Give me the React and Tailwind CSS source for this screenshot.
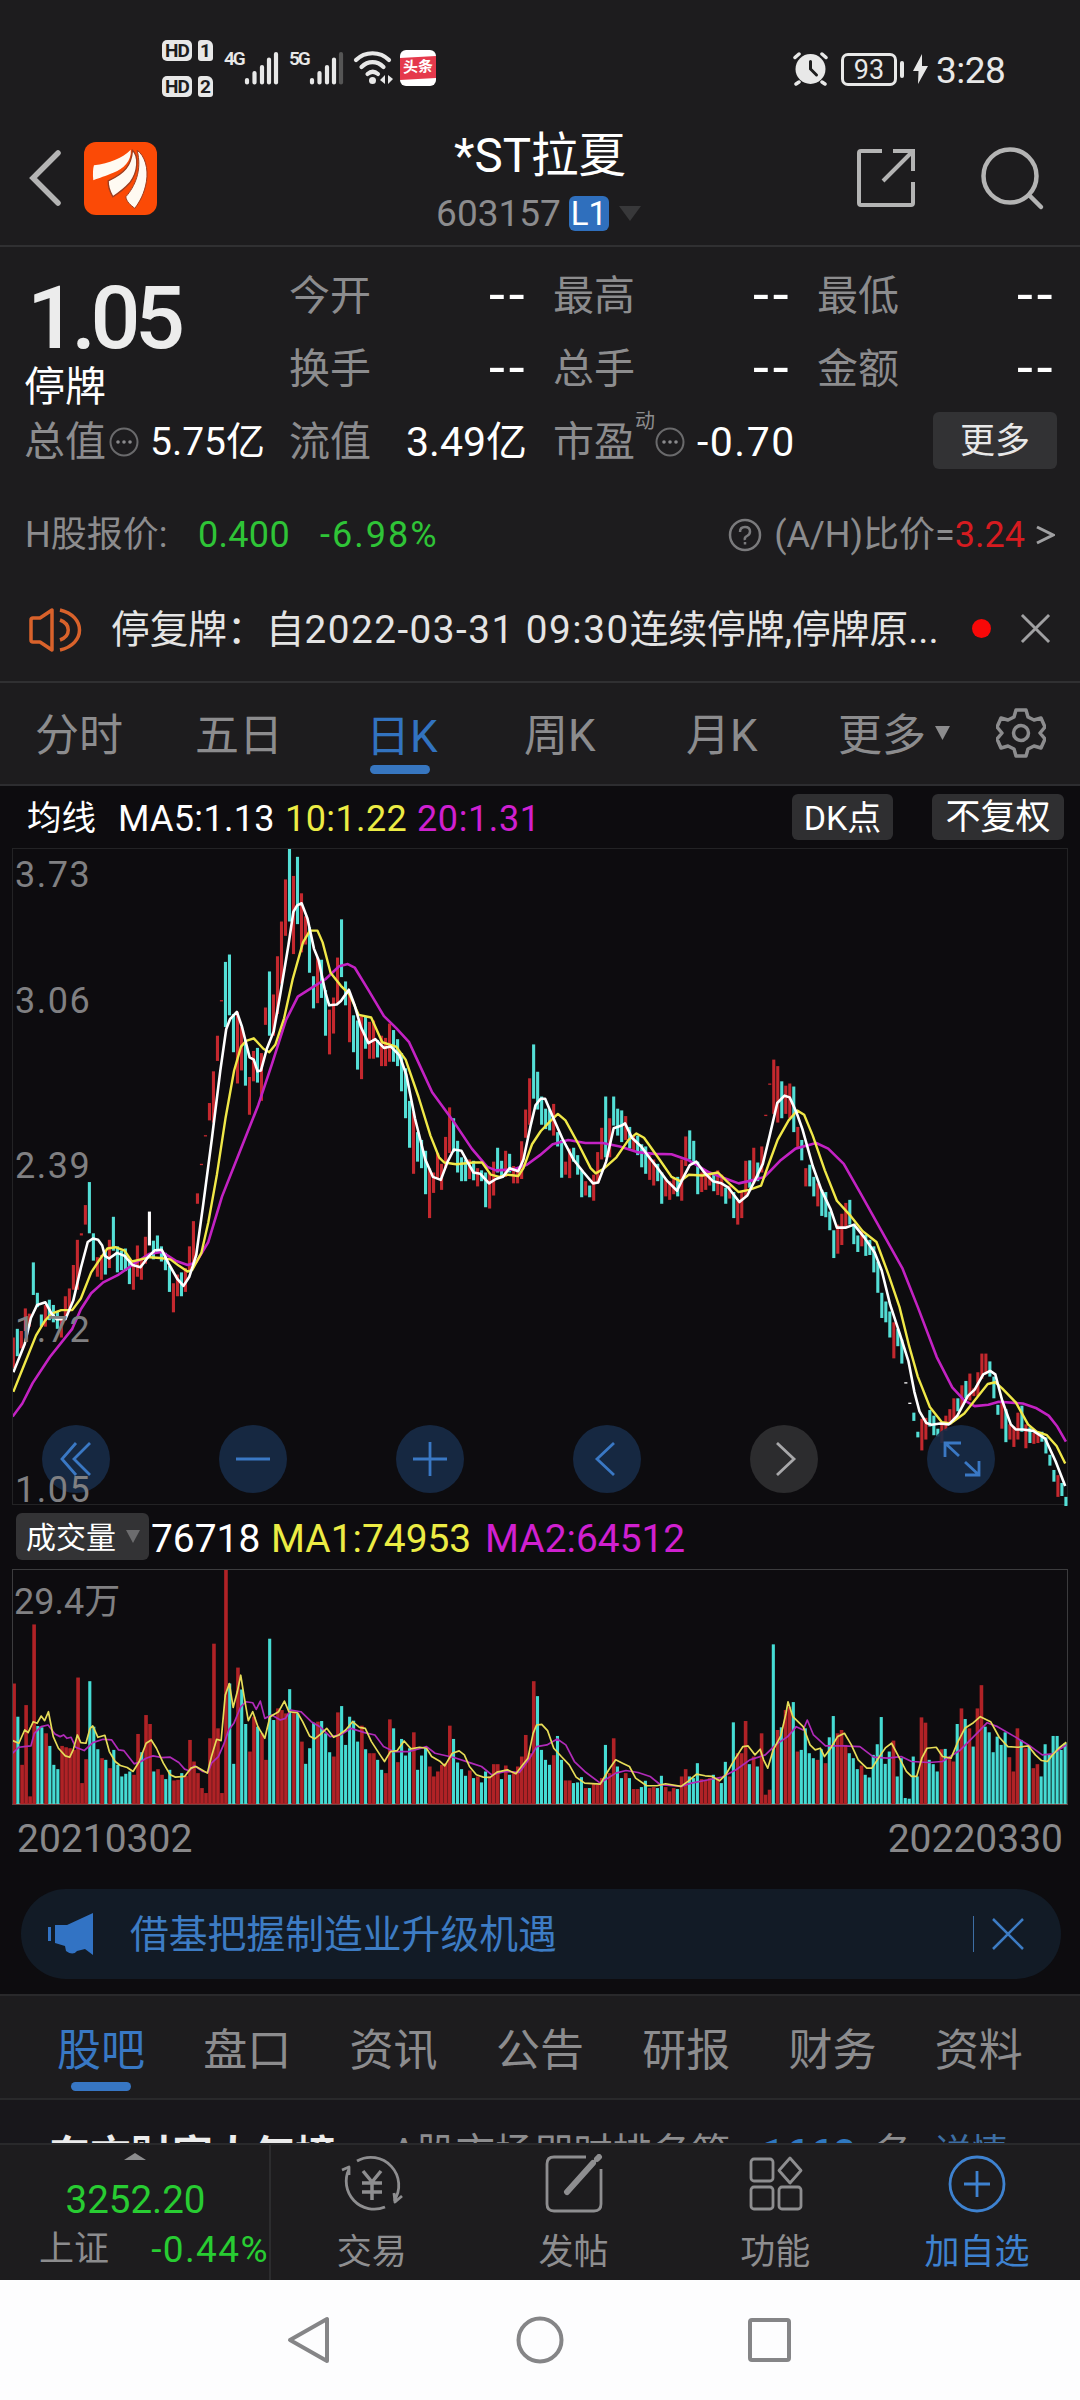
import React from "react";

// [high, low, type] per day, r = up, c = down, w = flat
const CANDLES = `1145,1215,r 1125,1188,c 1130,1170,r 1078,1130,r 1090,1120,r 972,1047,c 1042,1075,c 1092,1120,c 1070,1120,r 1058,1105,c 1070,1110,c 1085,1125,c
1100,1145,r 1050,1105,r 1032,1085,r 978,1035,r 920,1035,r 905,910,r 840,885,r 787,905,c 905,968,c 960,1005,r 955,1012,r 945,1000,c 920,985,r 867,945,c 935,995,c
945,990,c 940,992,c 965,1022,c 970,1035,r 933,1005,r 965,1012,r 913,975,r 855,933,w 922,965,c 910,950,c 935,970,c 950,990,c 980,1040,c 1020,1087,r 1000,1050,r
995,1050,c 985,1040,r 935,990,r 877,980,r 813,837,r 745,748,r 679,682,r 605,645,r 532,650,r 450,508,r 368,371,r 280,430,c 263,403,c 400,488,c 395,560,r 430,530,r
460,565,c 545,632,r 485,555,r 478,558,c 490,600,r 385,425,r 302,450,c 355,450,r 267,400,r 187,330,r 90,220,r 20,187,c 82,262,r 38,193,c 122,258,r 175,240,r
200,305,c 313,387,c 270,375,r 275,363,c 345,450,c 390,493,r 362,445,r 270,375,r 182,315,c 325,380,c 350,465,r 403,488,c 415,528,c 405,550,r 405,480,c 418,503,r
415,503,r 460,500,c 450,520,r 455,520,r 422,510,r 437,510,c 458,520,c 490,578,c 525,640,c 600,708,c 625,768,r 672,740,c 690,755,c 715,815,c 755,870,r 765,812,r
720,780,r 745,805,r 683,755,r 615,720,r 640,718,c 692,765,c 730,785,c 735,785,c 735,780,r 738,783,c 755,797,r 760,785,c 765,845,c 765,848,r 740,818,r 708,765,c
738,775,c 715,775,r 722,765,c 750,790,r 755,790,r 693,780,r 620,685,r 548,655,r 470,595,c 533,620,c 590,655,c 618,665,c 620,668,c 607,680,r 672,705,c 690,777,c
740,770,r 710,778,r 708,740,c 725,770,c 760,822,c 785,818,r 795,822,c 770,830,r 718,790,r 662,735,r 590,730,c 640,730,r 590,657,c 618,680,c 622,695,c 635,690,r
660,710,c 680,715,r 680,725,c 700,753,c 705,768,c 725,782,r 735,795,r 745,785,c 765,837,c 780,820,r 785,828,r 780,815,r 775,820,c 735,830,r 682,750,r 668,735,c
692,745,c 740,815,c 765,810,r 760,805,r 765,795,r 770,808,c 760,817,r 770,820,r 800,837,c 795,825,r 810,870,c 830,885,r 810,870,r 738,820,r 737,800,c 708,790,r
742,785,c 705,765,r 632,635,r 560,563,r 505,630,r 520,650,r 555,640,c 565,630,r 560,640,r 567,672,c 660,710,r 690,737,c 755,797,r 747,797,c 775,820,c 790,843,r
805,865,c 810,868,c 855,898,c 898,962,c 885,952,r 860,932,r 835,890,r 828,885,c 885,930,c 910,948,c 900,935,r 908,957,c 920,955,c 935,995,c 970,1042,c 1042,1100,c
1062,1110,c 1085,1145,c 1110,1193,r 1125,1165,c 1150,1205,c 1248,1251,w 1295,1298,w 1318,1337,c 1362,1375,c 1332,1405,r 1330,1380,r 1312,1350,c 1325,1370,c
1355,1373,c 1340,1388,r 1325,1360,r 1310,1345,r 1285,1335,r 1285,1315,c 1255,1305,r 1245,1285,c 1228,1290,r 1262,1280,r 1225,1280,r 1182,1240,r 1182,1230,r
1200,1235,c 1235,1285,c 1300,1323,c 1290,1355,r 1310,1386,c 1345,1380,r 1350,1397,r 1318,1380,r 1302,1362,c 1345,1400,r 1352,1388,c 1365,1390,r 1365,1388,r
1362,1385,c 1375,1412,c 1415,1440,c 1450,1477,c 1462,1512,r 1480,1510,c 1512,1533,c`.split(/\s+/).map((d) => d.split(","));

const MA5 = "39,1225 72,1160 90,1100 108,1070 132,1064 150,1090 165,1103 190,1103 213,1060 235,985 255,925 270,917 285,920 297,933 305,957 317,963 340,950 362,957 385,978 408,983 432,958 450,944 470,943 490,975 515,1010 533,1026 550,1005 570,955 590,840 615,690 640,530 657,435 668,412 688,395 703,430 725,500 737,505 748,532 758,530 775,480 795,440 815,350 838,240 852,165 863,150 876,145 893,180 912,250 925,275 945,350 956,380 978,378 990,370 1013,344 1030,380 1048,430 1070,467 1090,458 1115,478 1135,475 1160,495 1180,540 1205,640 1235,735 1257,775 1280,782 1300,740 1318,712 1340,715 1357,740 1375,765 1395,768 1420,790 1440,780 1460,775 1480,755 1505,762 1520,735 1540,660 1555,610 1570,595 1583,595 1607,640 1635,690 1665,735 1695,765 1722,790 1737,788 1760,740 1782,663 1805,657 1815,652 1835,685 1862,705 1885,730 1910,755 1938,785 1966,807 1985,775 2003,748 2022,740 2045,765 2070,785 2095,790 2115,800 2147,833 2170,818 2197,775 2215,745 2235,680 2257,605 2278,588 2293,592 2312,625 2330,665 2360,750 2385,805 2412,850 2430,892 2455,892 2480,885 2510,915 2540,950 2560,990 2585,1070 2612,1135 2638,1200 2655,1270 2670,1315 2690,1342 2705,1346 2730,1343 2755,1345 2780,1325 2810,1280 2830,1265 2855,1230 2875,1222 2890,1230 2910,1290 2935,1345 2950,1357 2970,1357 3000,1360 3035,1378 3065,1430 3093,1487";
const MA10 = "39,1270 72,1205 105,1140 130,1107 150,1090 178,1082 210,1082 235,1055 265,995 290,965 312,940 335,937 362,945 383,970 410,965 435,960 465,962 495,965 520,980 545,993 558,990 585,950 605,880 630,770 655,640 680,530 700,475 715,462 737,456 765,480 782,488 800,470 825,410 850,320 880,235 900,208 922,208 937,235 960,305 990,335 1015,355 1042,402 1078,408 1110,465 1150,475 1178,505 1215,590 1250,680 1275,730 1290,742 1325,746 1375,742 1400,742 1425,770 1450,775 1475,770 1505,773 1520,755 1545,700 1570,670 1600,645 1620,630 1642,645 1680,700 1715,755 1730,767 1755,755 1790,730 1825,690 1848,675 1870,685 1915,735 1950,775 1975,785 2000,770 2040,772 2085,765 2110,785 2145,810 2175,805 2210,795 2230,750 2258,690 2290,645 2315,622 2335,632 2360,680 2395,760 2430,830 2470,865 2505,900 2545,925 2580,1000 2612,1075 2640,1165 2665,1235 2700,1305 2735,1340 2760,1343 2800,1320 2845,1275 2868,1252 2890,1248 2910,1262 2950,1295 2985,1345 3010,1362 3040,1370 3068,1395 3093,1435";
const MA20 = "37,1327 65,1297 95,1250 145,1190 210,1125 235,1080 265,1043 300,1018 345,1000 390,975 435,952 470,948 510,968 545,978 570,972 605,925 645,820 690,730 750,610 790,515 830,415 865,360 905,340 945,320 985,290 1010,285 1030,293 1070,345 1115,405 1150,432 1188,465 1220,520 1255,580 1315,645 1370,710 1415,752 1440,760 1490,758 1530,747 1568,725 1605,700 1650,690 1700,697 1750,697 1800,705 1850,718 1900,722 1950,723 2000,737 2060,765 2110,780 2145,790 2190,782 2220,775 2265,738 2310,710 2370,697 2405,710 2450,745 2500,815 2560,900 2620,985 2665,1075 2720,1190 2765,1260 2800,1290 2830,1303 2870,1300 2900,1293 2970,1297 3010,1308 3045,1325 3070,1350 3095,1385";

const VOLUMES = `r550 c650 r795 r615 r890 r372 c678 c682 r700 c738 c795 c808 r738 r742 r745 r750 r532 r850 r778 c543 c680 c748 r775 c780 r805 c750 c795 c830 c822 c815 r825 r702 c757 r645 r672 c815 r808 r825 c838 c810 r842 r840 c820 r828 r720 r785 r820 r865 r880 r715 r430 r685 r880 r208 c550 c792 r502 c568 c672 r755 r650 c680 r700 r780 c415 c660 r625 r630 r640 c567
r635 c640 r725 c792 c745 c668 r665 c663 c700 c757 r770 r637 c618 c735 c650 c662 c725 r677 c748 r760 r760 c780 c810 r820 r658 c685 r787 c717 c767 c745 r697 c810 c767 c745 r800 r830 r815 r795 r790 r677 c717 c788 c808 c828 r812 c835 r830 c848 c815 r830 r793 r793 c838 r797 c825 r820 r800 r770 r705 r760 r543 c588
c750 c780 c795 r766 c708 c780 r842 r842 c850 c848 c832 r865 c865 r850 r855 r835 c735 r820 r715 c800 c835 r820 c835 r868 r868 c862 c843 r865 r862 c865 c828 r862 r875 r865 c868 r830 r808 c830 c835 c790 r838 r840 r835 c825 r835 c850 c786 r830 c667 r760 r760 r663 c793 r770 c800 r700 r885 r870 c432 r690 c682 r630 r620 c606 r755 c750 c685 c760 c775
r780 c748 r790 c712 c648 r700 r690 r735 c760 c775 c808 r797 c825 c833 c765 c733 c651 c792 c755 r722 c830 c775 c895 c897 c770 c830 r652 r668 c780 c793 c815 r748 c747 r775 r785 c672 r625 c657 r685 c740 r625 r555 c680 c697 c757 c710 c735 c697 r772 r815 r685 c720 r745 c738 r805 r793 c830 c733 c765 c708 c708 c750 c730`.split(/\s+/);

const VMA1 = "37,722 55,730 72,690 82,698 97,665 108,670 120,648 130,662 141,635 155,710 170,745 190,768 203,772 213,750 225,705 235,728 250,730 262,685 270,678 285,712 305,706 318,755 335,785 350,797 370,803 387,815 405,785 425,730 440,720 455,745 475,790 495,825 510,832 537,830 555,805 570,800 590,812 603,820 615,770 630,718 643,722 655,585 667,550 678,622 690,575 700,525 710,590 722,662 735,635 750,680 770,715 785,650 810,635 827,603 840,635 865,638 880,665 900,708 915,717 935,700 950,685 970,712 985,705 1005,690 1025,665 1045,682 1062,685 1080,725 1105,765 1118,785 1135,755 1155,752 1175,723 1195,747 1220,742 1240,745 1255,770 1280,785 1293,798 1315,760 1335,753 1350,765 1365,800 1385,825 1405,832 1425,833 1445,817 1475,810 1500,822 1520,795 1535,775 1550,700 1560,675 1575,673 1592,692 1610,745 1632,770 1655,795 1675,832 1700,850 1745,853 1770,810 1790,780 1810,790 1830,800 1848,835 1880,858 1910,858 1935,852 1980,860 2000,845 2025,823 2050,828 2070,830 2092,843 2110,825 2135,780 2160,740 2175,738 2195,765 2210,748 2220,780 2232,805 2248,750 2270,708 2285,640 2291,605 2305,650 2335,680 2355,735 2370,750 2385,745 2397,770 2415,745 2435,710 2455,700 2475,735 2495,780 2520,805 2535,805 2560,765 2575,743 2592,730 2610,765 2635,815 2650,830 2665,830 2680,775 2695,745 2722,742 2740,770 2765,775 2785,725 2805,685 2830,668 2850,650 2880,665 2905,712 2930,740 2960,742 2990,738 3010,765 3028,782 3045,785 3060,765 3078,745 3100,727";
const VMA2 = "37,760 55,742 70,740 90,738 100,700 120,680 140,675 160,702 175,710 185,705 195,715 207,712 220,742 245,752 270,728 300,718 325,720 345,750 360,752 390,792 410,785 425,775 445,768 470,773 495,772 520,788 537,808 550,813 565,798 590,815 605,818 615,790 635,770 650,735 665,690 680,670 700,620 715,605 735,608 745,628 757,603 770,655 790,645 815,660 830,655 845,630 875,635 905,665 930,680 960,710 990,705 1020,685 1060,698 1090,705 1115,740 1145,755 1190,755 1240,740 1265,760 1320,773 1370,790 1400,800 1430,825 1470,815 1510,818 1540,775 1560,740 1590,735 1620,717 1645,735 1670,785 1700,815 1745,850 1790,820 1820,812 1855,818 1890,830 1920,855 1980,860 2010,850 2060,840 2100,832 2140,810 2180,780 2225,765 2255,735 2290,710 2315,680 2335,690 2347,660 2365,705 2400,738 2450,738 2500,740 2540,772 2580,775 2620,770 2650,785 2700,788 2740,785 2790,752 2840,700 2870,668 2900,680 2950,710 2990,735 3030,765 3060,762 3100,735";

const COLORS = { r: "#c4282e", c: "#54dfd6", w: "#ffffff" };

const StatusBar = () => (
    <header className="h-[102px] flex items-start justify-between pl-[162px] pr-[75px] pt-10 text-[#e8e8e8]">
        <div className="flex items-start">
            <div className="flex flex-col gap-[15px] w-[62px]">
                {["1", "2"].map((n) => (
                    <div key={n} className="flex gap-1.5 text-[#1d1d1e] font-bold text-[19px] leading-[22px]">
                        <span className="w-[30px] h-[21px] rounded-[5px] bg-[#e8e8e8] text-center tracking-[-1px]">HD</span>
                        <span className="w-[15px] h-[21px] rounded-[3px] rounded-tr-[6px] bg-[#e8e8e8] text-center">{n}</span>
                    </div>
                ))}
            </div>
            {["4G", "5G"].map((n) => (
                <div key={n} className="flex w-[65px] mt-[9px]">
                    <span className="w-[20px] text-[19px] leading-[19px] font-semibold tracking-[-2px]">{n}</span>
                    <svg width="36" height="36" viewBox="0 0 36 36" stroke="#e8e8e8" strokeWidth="4.2" strokeLinecap="round">
                        <path d="M3 33.500V31M10.500 33.500V24M18 33.500V18M25 33.500V10.500" />
                        <path d="M32 33.500V5" stroke={n === "5G" ? "#555" : "#e8e8e8"} />
                    </svg>
                </div>
            ))}
            <svg className="mt-[10px] ml-[-1px]" width="40" height="36" viewBox="0 0 40 36" fill="none" stroke="#e8e8e8" strokeWidth="4.200" strokeLinecap="round">
                <path d="M3 10C12 1 27 1 36 10M8.500 17C15 10.500 24 10.500 30.500 17M14.500 24C18 21 21.500 21 25 24" />
                <circle cx="19.500" cy="30.500" r="3.500" fill="#e8e8e8" stroke="none" />
                <path d="M32 25v9l-5-4zM35 25v9l5-5z" fill="#e8e8e8" stroke="none" />
            </svg>
            <div className="mt-[10px] ml-[7px] w-9 h-9 rounded-[6px] bg-white flex items-center overflow-hidden">
                <span className="w-9 h-[22px] bg-[#e5394c] text-white text-[15px] leading-[21px] font-bold text-center -skew-y-3">头条</span>
            </div>
        </div>
        <div className="flex items-center mt-[11px] h-9">
            <svg width="36" height="34" viewBox="0 0 36 34" fill="none" stroke="#e8e8e8" strokeLinecap="round">
                <circle cx="17.500" cy="17" r="15" fill="#e8e8e8" stroke="none" />
                <path d="M2 5.500L6 2M33 5.500L29 2M6 30l-3 2M29 30l3 2" strokeWidth="3.500" />
                <path d="M17.500 9.500V17l6 6" stroke="#1d1d1e" strokeWidth="3" />
            </svg>
            <div className="ml-3 w-14 h-[33px] border-[3px] border-[#e8e8e8] rounded-[7px] text-[27px] leading-[28px] text-center">93</div>
            <span className="ml-[3px] w-1 h-[17px] bg-[#e8e8e8] rounded-sm" />
            <svg className="ml-[9px]" width="15" height="30" viewBox="0 0 15 30"><path d="M9 0L0 17h5.500L5 30l10-18H9z" fill="#e8e8e8" /></svg>
            <span className="ml-[8px] w-[69px] text-[37px] leading-9 tracking-[-0.500px] whitespace-nowrap pt-1">3:28</span>
        </div>
    </header>
);

const TitleBar = () => (
    <div className="h-[145px] flex justify-between border-b-2 border-[#303032] text-[#b4b4b4]">
        <div className="flex w-[300px] pt-[40px] pl-[29px]">
            <svg width="32" height="72" viewBox="0 0 32 72" fill="none" stroke="#b4b4b4" strokeWidth="5.500" strokeLinecap="round">
                <path d="M29 11L4 36l25 25" />
            </svg>
            <div className="ml-[23px] w-[73px] h-[73px] rounded-xl bg-[#fb4a06]">
                <svg width="73" height="73" viewBox="222 36 220 218">
                    <path d="M252 105C300 98 335 85 363 58C366 92 340 115 312 127C285 138 270 143 250 150C248 130 249 115 252 105Z" fill="#fffaf2" />
                    <path d="M295 152C345 130 365 105 368 60C388 78 385 125 360 158C342 178 328 188 309 200C300 185 294 170 295 152Z" fill="#fffaf2" stroke="#9b3c20" strokeWidth="4" />
                    <path d="M348 200C375 170 398 120 382 60C405 75 417 115 410 155C404 190 390 215 375 235C362 225 350 215 348 200Z" fill="#fffaf2" stroke="#9b3c20" strokeWidth="3" />
                </svg>
            </div>
        </div>
        <div className="flex flex-col items-center pt-[29px]">
            <h1 className="text-white text-[47.500px] leading-[50px]">*ST拉夏</h1>
            <div className="flex items-center h-9 mt-[15px] ml-[-3px]">
                <span className="text-[37px] leading-9 text-[#8c8c8e]">603157</span>
                <span className="ml-2 w-10 h-[35px] rounded-md bg-[#2f6fbd] text-white text-[33px] leading-[36px] text-center">L1</span>
                <svg className="ml-2.5" width="22" height="15"><path d="M0 0h22L11 15z" fill="#38383a" /></svg>
            </div>
        </div>
        <div className="flex justify-end w-[300px] pr-[35px] pt-[44px]">
            <svg width="60" height="64" viewBox="0 0 60 64" fill="none" stroke="#b4b4b4" strokeWidth="4">
                <path d="M25 5H4q-2 0-2 2v50q0 2 2 2h50q2 0 2-2V36M36 5h20v20M56 5L26 35" />
            </svg>
            <svg className="ml-[63px]" width="65" height="66" viewBox="0 0 65 66" fill="none" stroke="#b4b4b4" strokeWidth="4.500" strokeLinecap="round">
                <circle cx="30" cy="30" r="26.500" />
                <path d="M49 49l12 12" />
            </svg>
        </div>
    </div>
);

const Dots = () => (
    <svg className="shrink-0" width="30" height="30" viewBox="0 0 30 30" fill="#8a8a8c">
        <circle cx="15" cy="15" r="13.500" fill="none" stroke="#6a6a6c" strokeWidth="2" />
        <circle cx="9" cy="15" r="1.800" /><circle cx="15" cy="15" r="1.800" /><circle cx="21" cy="15" r="1.800" />
    </svg>
);

const Stat = ({ label, value = "--" }) => (
    <div className="flex items-center justify-between whitespace-nowrap">
        <span className="text-[41px] text-[#8c8c8e]">{label}</span>
        <span className={value === "--" ? "text-[52px] leading-[54px] mt-[-7px] tracking-[1px] font-['DejaVu_Sans',sans-serif]" : "text-[41px]"}>{value}</span>
    </div>
);

const Quote = () => (
    <section className="h-[333px] pt-[13px]">
        <div className="grid grid-cols-[238px_238px_238px_238px] gap-x-[26px] auto-rows-[73px] px-[25px] text-white">
            <div className="row-span-2 flex flex-col">
                <span className="text-[88px] leading-[92px] mt-[12px] ml-[2px] font-medium tracking-[-5.500px] text-[#ececec]">1.05</span>
                <span className="text-[41px] leading-[46px] ml-[-1px]">停牌</span>
            </div>
            <Stat label="今开" />
            <Stat label="最高" />
            <Stat label="最低" />
            <Stat label="换手" />
            <Stat label="总手" />
            <Stat label="金额" />
            <div className="flex items-center whitespace-nowrap ml-[-1px]">
                <span className="text-[41px] text-[#8c8c8e] mr-[3px]">总值</span>
                <Dots />
                <span className="text-[39px] ml-[11px]">5.75亿</span>
            </div>
            <Stat label="流值" value="3.49亿" />
            <div className="flex items-center whitespace-nowrap">
                <span className="text-[41px] text-[#8c8c8e]">市盈</span>
                <span className="text-[20px] text-[#8c8c8e] self-start leading-none mt-[5px] w-[24px]">动</span>
                <Dots />
                <span className="text-[41px] tracking-[1.500px] ml-[12px]">-0.70</span>
            </div>
            <div className="flex items-center justify-end mr-[-2px] mt-[-3px]">
                <button className="w-[124px] h-[57px] rounded-md bg-[#323234] text-[35px] leading-none pt-[2px] text-[#e8e8e8]">更多</button>
            </div>
        </div>
        <div className="h-[112px] flex items-center justify-between px-[25px] text-[36px] text-[#8c8c8e] whitespace-nowrap">
            <div className="flex">
                <span className="w-[173px]">H股报价:</span>
                <span className="w-[122px] tracking-[0.300px] text-[#2fc437]">0.400</span>
                <span className="text-[#2fc437] tracking-[2px]">-6.98%</span>
            </div>
            <div className="flex items-center">
                <svg className="mr-[12px]" width="34" height="34" viewBox="0 0 34 34" fill="none" stroke="#7a7a7c" strokeWidth="2.500">
                    <circle cx="17" cy="17" r="15" />
                    <path d="M12 14q0-5 5-5t5 4.500q0 3-3 4.500t-2 4M17 24v2.500" />
                </svg>
                <span>(A/H)比价=</span>
                <span className="text-[#d61b20]">3.24</span>
                <svg className="ml-[11px]" width="19" height="20" viewBox="0 0 19 20" fill="none" stroke="#a0a0a2" strokeWidth="3"><path d="M1 2l16 8-16 8" /></svg>
            </div>
        </div>
    </section>
);

const Notice = () => (
    <div className="h-[103px] flex items-center pl-[28px] border-b-2 border-[#303032] text-[#e4e4e4]">
        <svg width="54" height="46" viewBox="0 0 54 46" fill="none" stroke="#d9622b" strokeWidth="3.500" strokeLinejoin="round">
            <path d="M3 13q0-2 2-2h7L24 3v40L12 35H5q-2 0-2-2zM32 3c26 6 26 34 0 40M32 13c11 4 11 16 0 20" />
        </svg>
        <p className="ml-[29px] w-[861px] text-[38.700px] leading-[46px] whitespace-nowrap">
            停复牌：自<span className="tracking-[1.500px]">2022-03-31 09:30</span>连续停牌,停牌原...
        </p>
        <span className="w-[19px] h-[19px] rounded-full bg-[#f80808] mt-[-3px]" />
        <svg className="ml-[29px] mt-[-3px]" width="31" height="31" viewBox="0 0 32 32" stroke="#a0a0a2" strokeWidth="3"><path d="M2 2l28 28M30 2L2 30" /></svg>
    </div>
);

const Periods = () => (
    <nav className="h-[103px] flex items-center pl-[35px] border-b-2 border-[#2d2d30] text-[44px] text-[#8c8c8e] whitespace-nowrap">
        <span className="w-[160px] pt-1.5">分时</span>
        <span className="w-[171px] pt-1.5">五日</span>
        <span className="w-[158px] h-full flex flex-col items-start text-[#3273c0]">
            <span className="leading-[80px] h-[82px] pt-[14px]">日K</span>
            <span className="w-[60px] h-[9px] rounded-full bg-[#3776c0] ml-[4px]" />
        </span>
        <span className="w-[162px] pt-1.5">周K</span>
        <span className="w-[152px] pt-1.5">月K</span>
        <span className="w-[97px] pt-1.5">更多</span>
        <svg width="15" height="14"><path d="M0 0h15L7.500 14z" fill="#8c8c8e" /></svg>
        <svg className="ml-[46px]" width="50" height="52" viewBox="0 0 50 52" fill="none" stroke="#8c8c8e" strokeWidth="3.500" strokeLinejoin="round">
            <path d="M20 3h10l2 7 6 3 7-2 4 9-5 6 5 6-4 9-7-2-6 3-2 7H20l-2-7-6-3-7 2-4-9 5-6-5-6 4-9 7 2 6-3z" />
            <circle cx="25" cy="26" r="7.500" />
        </svg>
    </nav>
);

const Line = ({ points, color, width }) => (
    <polyline points={points} fill="none" stroke={color} strokeWidth={width} strokeLinejoin="round" vectorEffect="non-scaling-stroke" />
);

const RoundButton = ({ children, gray }) => (
    <button className={`w-[68px] h-[68px] rounded-full flex items-center justify-center ${gray ? "bg-[#2c2c2e] text-[#a8a8aa]" : "bg-[#172b47]/90 text-[#3a78c4]"}`}>
        <svg width="44" height="44" viewBox="0 0 44 44" fill="none" stroke="currentColor" strokeWidth="2.800">{children}</svg>
    </button>
);

const PriceChart = () => (
    <section>
        <div className="h-[62px] flex items-center pl-[27px] pr-4 text-[36px] text-white whitespace-nowrap">
            <span className="w-[91px] text-[34.500px] pt-[4px]">均线</span>
            <span className="w-[167px] pt-[4px] tracking-[0.300px]">MA5:1.13</span>
            <span className="w-[132px] pt-[4px] tracking-[0.400px] text-[#ecec44]">10:1.22</span>
            <span className="pt-[4px] tracking-[0.600px] text-[#d020d0]">20:1.31</span>
            <span className="ml-auto w-[101px] h-[46px] rounded-md bg-[#2f2f31] text-[34px] leading-[48px] text-center">DK点</span>
            <span className="ml-[39px] w-[132px] h-[46px] rounded-md bg-[#2f2f31] text-[35px] leading-[48px] text-center">不复权</span>
        </div>
        <div className="relative ml-3 w-[1056px] h-[657px] border border-[#232325]">
            <svg className="block" width="1056" height="657" viewBox="38 20 3066 1513" preserveAspectRatio="none">
                {CANDLES.map(([high, low, type], i) => (
                    <path key={i} d={`M${39 + i * 11.62} ${high}V${low}`} stroke={COLORS[type]} strokeWidth="3.100" vectorEffect="non-scaling-stroke" />
                ))}
                <Line points={MA20} color="#c322c3" width="2.600" />
                <Line points={MA10} color="#f0e848" width="2.400" />
                <Line points={MA5} color="#ffffff" width="2.600" />
            </svg>
            <div className="absolute left-[29px] top-[576px] flex gap-[109px]">
                <RoundButton><path d="M22 6L8 22l14 16M36 6L20 22l16 16" /></RoundButton>
                <RoundButton><path d="M5 22h34" /></RoundButton>
                <RoundButton><path d="M5 22h34M22 5v34" /></RoundButton>
                <RoundButton><path d="M29 6L12 22l17 16" /></RoundButton>
                <RoundButton gray><path d="M15 6l17 16-17 16" /></RoundButton>
                <RoundButton><path d="M6 20V6h16M6 6l14 13M40 24v14H26M40 38L26 25" /></RoundButton>
            </div>
            <div className="absolute left-[2px] inset-y-0 text-[36px] leading-9 tracking-[1.500px] text-[#808082] flex flex-col">
                <span className="mt-2">3.73</span>
                <span className="mt-[90px]">3.06</span>
                <span className="mt-[129px]">2.39</span>
                <span className="mt-[128px]">1.72</span>
                <span className="mt-[124px]">1.05</span>
            </div>
        </div>
    </section>
);

const VolumeChart = () => (
    <section>
        <div className="h-[64px] flex items-center pl-4 text-[38.900px] whitespace-nowrap">
            <span className="w-[133px] h-[47px] rounded-md bg-[#333335] flex items-center pl-2.5 text-[30px] text-white">
                <span className="pt-[2px]">成交量</span>
                <svg className="ml-2.5" width="14" height="13"><path d="M0 0h14L7 13z" fill="#6c6c6e" /></svg>
            </span>
            <span className="ml-[2px] w-[120px] pt-[4px] text-white">76718</span>
            <span className="w-[214px] pt-[4px] text-[#ecec44]">MA1:74953</span>
            <span className="pt-[4px] text-[#d020d0]">MA2:64512</span>
        </div>
        <div className="relative ml-3 w-[1056px] h-[236px] border border-b-2 border-[#3c3c3e] border-b-[#704040]">
            <svg className="block" width="1054" height="234" viewBox="38 208 3064 705" preserveAspectRatio="none">
                {VOLUMES.map((v, i) => {
                    const x = 36 + i * 11.62;
                    const top = Number(v.slice(1));
                    return (
                        <rect key={i} x={x} y={top} width={v[0] === "r" ? 10.500 : 9} height={913 - top} fill={v[0] === "r" ? "#b02226" : "#45dcd4"} />
                    );
                })}
                <Line points={VMA2} color="#b02ab8" width="1.700" />
                <Line points={VMA1} color="#e6dc58" width="1.700" />
            </svg>
            <span className="absolute left-[1px] top-[12px] text-[36px] leading-10 text-[#808082]">29.4万</span>
        </div>
        <div className="h-[69px] flex items-center justify-between pl-[17px] pr-[17px] text-[39px] text-[#88888a]">
            <span>20210302</span>
            <span>20220330</span>
        </div>
    </section>
);

const Banner = () => (
    <div className="mt-[15px] mb-[14px] ml-[21px] mr-[19px] h-[90px] rounded-[45px] bg-[#121b26] flex items-center pl-[26px] pr-[36px] text-[#3d7cc4]">
        <svg width="46" height="42" viewBox="0 0 46 42" fill="#3273c4">
            <path d="M1 14h3v14H1zM8 12h12L46 0v42l-8-6-8 2q-4 5-11 0l-1-5-10-3z" />
        </svg>
        <span className="ml-[37px] pt-[2px] text-[38.800px]">借基把握制造业升级机遇</span>
        <span className="ml-auto w-px h-9 bg-[#3d6ea4]" />
        <svg className="ml-[17px]" width="34" height="34" viewBox="0 0 34 34" stroke="#3d7cc4" strokeWidth="2.500"><path d="M2 2l30 30M32 2L2 32" /></svg>
    </div>
);

const Tabs = () => (
    <nav className="h-[106px] border-y-2 border-[#29292b] flex gap-[58.300px] pl-[57px] text-[44px] text-[#8c8c8e] whitespace-nowrap">
        {["股吧", "盘口", "资讯", "公告", "研报", "财务", "资料"].map((tab, i) => (
            <div key={tab} className={`w-[88px] flex flex-col items-center ${i === 0 ? "text-[#3878c4]" : ""}`}>
                <span className="h-[86px] leading-[111px]">{tab}</span>
                {i === 0 && <span className="w-[60px] h-[9px] rounded-full bg-[#3776c4]" />}
            </div>
        ))}
    </nav>
);

const RankRow = () => (
    <div className="h-[43px] overflow-hidden bg-[#18171b] flex items-start pl-[49px] pt-[26px] text-[39.200px] text-[#8c8c8e] whitespace-nowrap">
        <span className="w-[342px] text-[41px] font-bold text-[#ececec]">东方财富人气榜</span>
        <span className="w-[370px] mt-[-2px]">A股市场即时排名第</span>
        <span className="w-[112px] mt-[-3px] text-[42px] text-[#2f78c0] font-medium">1660</span>
        <span className="w-[61px] mt-[-2px]">名</span>
        <span className="text-[37px] text-[#3d6ea4]">详情»</span>
    </div>
);

const Action = ({ label, children, active }) => (
    <div className={`flex-1 flex flex-col items-center pt-[9px] ${active ? "text-[#3e82d0]" : "text-[#8e8e90]"}`}>
        <svg width="64" height="60" viewBox="0 0 64 60" fill="none" stroke="currentColor" strokeWidth="2.800" strokeLinejoin="round">{children}</svg>
        <span className="mt-[14px] text-[35px] leading-[50px]">{label}</span>
    </div>
);

const ActionBar = () => (
    <footer className="h-[137px] border-t-2 border-[#29292b] flex">
        <div className="w-[271px] border-r-2 border-[#2c2c2e] flex flex-col items-center text-[#28cc32]">
            <svg className="mt-2" width="22" height="7"><path d="M0 7L11 0l11 7z" fill="#8c8c8e" /></svg>
            <span className="mt-[17px] ml-[2px] text-[38.500px] leading-[46px]">3252.20</span>
            <div className="flex items-center self-stretch pl-[39px] mt-[2px] leading-[50px]">
                <span className="w-[113px] text-[35px] text-[#8c8c8e]">上证</span>
                <span className="text-[37px] tracking-[1.400px]">-0.44%</span>
            </div>
        </div>
        <div className="flex-1 flex mr-[2px]">
            <Action label="交易">
                <path d="M17 7a28 28 0 0 1 37 40M45 53A28 28 0 0 1 9 15M2 16l7-3v8M62 42l-7 6-1-9" />
                <path d="M23 17l9 11 9-11M32 28v18M22 29h20M22 38h20" strokeWidth="3.500" />
            </Action>
            <Action label="发帖">
                <path d="M44 3H12q-7 0-7 7v40q0 7 7 7h40q7 0 7-7V15" />
                <path d="M51 9L25 38M57 3l-2 2" strokeWidth="6" strokeLinecap="round" />
            </Action>
            <Action label="功能">
                <rect x="8" y="5" width="22" height="22" rx="3" /><path d="M47 4l11 12.500L47 29 36 16.500z" />
                <rect x="8" y="33" width="22" height="22" rx="3" /><rect x="36" y="33" width="22" height="22" rx="3" />
            </Action>
            <Action label="加自选" active>
                <circle cx="32" cy="30" r="27" /><path d="M19 30h26M32 17v26" />
            </Action>
        </div>
    </footer>
);

const SystemNav = () => (
    <div className="h-[120px] bg-[#fdfdfe] flex items-center justify-center gap-[181px]">
        <svg width="48" height="50" viewBox="0 0 48 50" fill="none" stroke="#858587" strokeWidth="4" strokeLinejoin="round"><path d="M41 4v42L4 25z" /></svg>
        <svg width="50" height="50" viewBox="0 0 50 50" fill="none" stroke="#858587" strokeWidth="4"><circle cx="25" cy="25" r="21.500" /></svg>
        <svg width="48" height="50" viewBox="0 0 48 50" fill="none" stroke="#858587" strokeWidth="4"><rect x="4" y="5" width="39" height="40" rx="2" /></svg>
    </div>
);

const App = () => (
    <div className="w-[1080px] h-[2400px] overflow-hidden bg-[#1d1c1e] flex flex-col font-['Roboto','Noto_Sans_CJK_SC',sans-serif]">
        <StatusBar />
        <TitleBar />
        <Quote />
        <Notice />
        <Periods />
        <main className="h-[1209px] bg-[#0d0c0f]">
            <PriceChart />
            <VolumeChart />
            <Banner />
        </main>
        <Tabs />
        <RankRow />
        <ActionBar />
        <SystemNav />
    </div>
);

export default App;
